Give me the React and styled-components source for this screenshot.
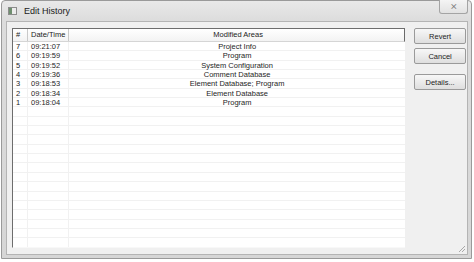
import React from 'react';
import styled, { createGlobalStyle } from 'styled-components';

const GlobalStyle = createGlobalStyle`
  html, body {
    margin: 0;
    padding: 0;
    background: #ffffff;
  }
  body {
    width: 474px;
    height: 262px;
    overflow: hidden;
    font-family: "Liberation Sans", Arial, sans-serif;
  }
`;

const ROW_H = 9.35;

const Window = styled.div`
  margin-left: 1px;
  width: 471px;
  height: 259px;
  box-sizing: border-box;
  border: 1px solid #9a9a9a;
  border-radius: 4px 4px 0 0;
  background: linear-gradient(#e9e9e9, #dcdcdc 20px, #d6d6d6);
  padding: 0 3px 3px 4px;
  display: flex;
  flex-direction: column;
`;

const TitleBar = styled.div`
  flex: none;
  height: 20px;
  display: flex;
  align-items: center;
  position: relative;
  padding-left: 2px;
`;

const TitleIcon = styled.div`
  width: 9px;
  height: 8px;
  box-sizing: border-box;
  border: 1px solid #8c8c8c;
  background: linear-gradient(90deg, #6f8f6f 0 3px, #ececec 3px);
  margin-right: 7px;
`;

const Title = styled.span`
  font-size: 9px;
  color: #1a1a1a;
`;

const CloseButton = styled.div`
  position: absolute;
  right: 0px;
  top: -1px;
  width: 29px;
  height: 14px;
  box-sizing: border-box;
  border: 1px solid #a4a4a4;
  border-top: none;
  border-radius: 0 0 3px 3px;
  background: linear-gradient(#f4f4f4, #e2e2e2);
  display: flex;
  align-items: center;
  justify-content: center;
  color: #777;
  font-size: 9px;
  line-height: 1;
`;

const Client = styled.div`
  flex: 1;
  min-height: 0;
  background: #f0f0f0;
  border: 1px solid #b4b4b4;
  display: flex;
  gap: 9px;
  padding: 6px 1px 6px 5px;
  position: relative;
`;

const ListView = styled.div`
  width: 394px;
  background: #ffffff;
  border-left: 1px solid #6d6d6d;
  border-top: 1px solid #6d6d6d;
  border-bottom: 1px solid #f8f8f8;
  overflow: hidden;
  display: flex;
  flex-direction: column;
`;

const Cols = styled.div`
  display: grid;
  grid-template-columns: 15px 41px 1fr;
`;

const HeaderRow = styled(Cols)`
  flex: none;
  height: 12px;
  background: linear-gradient(#ffffff, #f3f3f3);
  border-bottom: 1px solid #d5d5d5;
  border-right: 1px solid #6a6a6a;
`;

const HeaderCell = styled.div`
  font-size: 7.5px;
  color: #222;
  line-height: 12px;
  padding-left: 3px;
  border-right: 1px solid #c9c9c9;
  text-align: ${p => (p.$center ? 'center' : 'left')};
  white-space: nowrap;
  &:last-child {
    border-right: none;
  }
`;

const Row = styled(Cols)`
  height: ${ROW_H}px;
  flex: none;
  border-bottom: 1px solid #f1f1f1;
  box-sizing: border-box;
`;

const Cell = styled.div`
  font-size: 7.5px;
  color: #1e1e1e;
  line-height: ${ROW_H}px;
  padding-left: ${p => (p.$center ? 0 : 3)}px;
  text-align: ${p => (p.$center ? 'center' : 'left')};
  border-right: 1px solid #f1f1f1;
  white-space: nowrap;
  &:last-child {
    border-right: none;
  }
`;

const ButtonColumn = styled.div`
  display: flex;
  flex-direction: column;
  width: 52px;
`;

const Button = styled.div`
  height: 16px;
  box-sizing: border-box;
  margin-top: ${p => p.$gap}px;
  border: 1px solid #9a9a9a;
  border-radius: 2px;
  background: linear-gradient(#f7f7f7, #ebebeb 50%, #dedede);
  font-size: 7.5px;
  color: #1e1e1e;
  display: flex;
  align-items: center;
  justify-content: center;
`;

const Grip = styled.svg`
  position: absolute;
  right: 1px;
  bottom: 1px;
`;

const history = [
  { n: 7, time: '09:21:07', areas: 'Project Info' },
  { n: 6, time: '09:19:59', areas: 'Program' },
  { n: 5, time: '09:19:52', areas: 'System Configuration' },
  { n: 4, time: '09:19:36', areas: 'Comment Database' },
  { n: 3, time: '09:18:53', areas: 'Element Database; Program' },
  { n: 2, time: '09:18:34', areas: 'Element Database' },
  { n: 1, time: '09:18:04', areas: 'Program' },
];

const emptyRows = Array.from({ length: 18 });

export default function App() {
  return (
    <>
      <GlobalStyle />
      <Window>
        <TitleBar>
          <TitleIcon />
          <Title>Edit History</Title>
          <CloseButton>⨯</CloseButton>
        </TitleBar>
        <Client>
          <ListView>
            <HeaderRow>
              <HeaderCell>#</HeaderCell>
              <HeaderCell>Date/Time</HeaderCell>
              <HeaderCell $center>Modified Areas</HeaderCell>
            </HeaderRow>
            {history.map(h => (
              <Row key={h.n}>
                <Cell>{h.n}</Cell>
                <Cell>{h.time}</Cell>
                <Cell $center>{h.areas}</Cell>
              </Row>
            ))}
            {emptyRows.map((_, i) => (
              <Row key={'e' + i}>
                <Cell />
                <Cell />
                <Cell />
              </Row>
            ))}
          </ListView>
          <ButtonColumn>
            <Button $gap={0}>Revert</Button>
            <Button $gap={4}>Cancel</Button>
            <Button $gap={10}>Details...</Button>
          </ButtonColumn>
          <Grip width="9" height="9" viewBox="0 0 9 9">
            <path d="M8 2 L2 8 M8 5 L5 8" stroke="#a8a8a8" strokeWidth="1" />
          </Grip>
        </Client>
      </Window>
    </>
  );
}
